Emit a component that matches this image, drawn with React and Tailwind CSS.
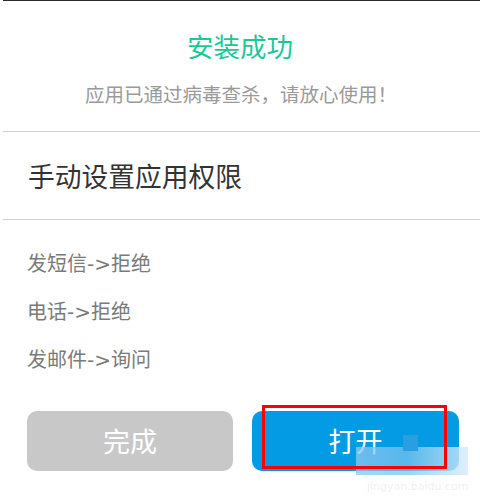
export default function App() {
  const cjk = { fontFamily: '"Noto Sans CJK SC", sans-serif' };
  const list = { fontFamily: '"DejaVu Sans", "Noto Sans CJK SC", sans-serif' };
  return (
    <div className="relative w-[480px] h-[498px] bg-white overflow-hidden flex flex-col" style={cjk}>
      <div className="h-px ml-[3px] bg-[#2a2a2a]" />
      <div className="flex flex-col items-center pt-[27px] pb-[23px] gap-[16px]">
        <div className="h-[36px] leading-[36px] text-[26.5px] text-[#1cc89a]">安装成功</div>
        <div className="h-[28px] leading-[28px] text-[19.5px] text-[#9a9a9a] pl-[2px]">应用已通过病毒查杀，请放心使用！</div>
      </div>
      <div className="h-px ml-[3px] bg-[#cfcfcf]" />
      <div className="h-[87px] flex items-center pl-[28px] pt-[2px] text-[26.75px] text-[#333333]">手动设置应用权限</div>
      <div className="h-px ml-[3px] bg-[#cfcfcf]" />
      <div className="pt-[20px] pl-[27px] flex flex-col text-[20px] text-[#7a7a7a]" style={list}>
        <div className="h-[48px] leading-[48px]">发短信-&gt;拒绝</div>
        <div className="h-[48px] leading-[48px]">电话-&gt;拒绝</div>
        <div className="h-[48px] leading-[48px]">发邮件-&gt;询问</div>
      </div>
      <div className="pt-[27px] flex gap-[19px] pl-[27px]">
        <div className="w-[206px] h-[60px] rounded-[10px] bg-[#c8c8c8] flex items-center justify-center text-white text-[27px]">完成</div>
        <div className="w-[207px] h-[60px] rounded-[10px] bg-[#049be5] flex items-center justify-center text-white text-[27px]">打开</div>
      </div>
      {/* watermark */}
      <div className="absolute left-[356px] top-[447px] w-[112px] h-[28px] opacity-90" style={{ background: 'linear-gradient(90deg, rgba(140,200,240,0.85), rgba(120,195,238,0.8) 45%, rgba(215,236,250,0.9))' }} />
      <div className="absolute left-[403px] top-[435px] w-[15px] h-[16px] bg-[#2a9fe0]" />
      <div className="absolute left-[367px] top-[480px] text-[11px] leading-[14px] text-[#f1f1f1]" style={{ fontFamily: '"DejaVu Sans", sans-serif' }}>jingyan.baidu.com</div>
      {/* red annotation */}
      <div className="absolute left-[262px] top-[405px] w-[185px] h-[64px] border-[3px] border-[#ff0000]" />
    </div>
  );
}
